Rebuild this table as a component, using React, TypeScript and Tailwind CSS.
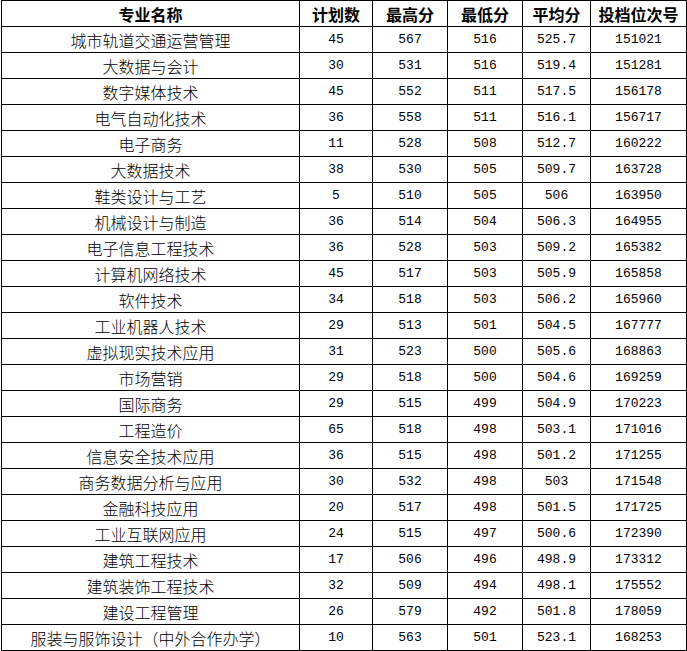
const rows: [string, string, string, string, string, string][] = [
  ['城市轨道交通运营管理', '45', '567', '516', '525.7', '151021'],
  ['大数据与会计', '30', '531', '516', '519.4', '151281'],
  ['数字媒体技术', '45', '552', '511', '517.5', '156178'],
  ['电气自动化技术', '36', '558', '511', '516.1', '156717'],
  ['电子商务', '11', '528', '508', '512.7', '160222'],
  ['大数据技术', '38', '530', '505', '509.7', '163728'],
  ['鞋类设计与工艺', '5', '510', '505', '506', '163950'],
  ['机械设计与制造', '36', '514', '504', '506.3', '164955'],
  ['电子信息工程技术', '36', '528', '503', '509.2', '165382'],
  ['计算机网络技术', '45', '517', '503', '505.9', '165858'],
  ['软件技术', '34', '518', '503', '506.2', '165960'],
  ['工业机器人技术', '29', '513', '501', '504.5', '167777'],
  ['虚拟现实技术应用', '31', '523', '500', '505.6', '168863'],
  ['市场营销', '29', '518', '500', '504.6', '169259'],
  ['国际商务', '29', '515', '499', '504.9', '170223'],
  ['工程造价', '65', '518', '498', '503.1', '171016'],
  ['信息安全技术应用', '36', '515', '498', '501.2', '171255'],
  ['商务数据分析与应用', '30', '532', '498', '503', '171548'],
  ['金融科技应用', '20', '517', '498', '501.5', '171725'],
  ['工业互联网应用', '24', '515', '497', '500.6', '172390'],
  ['建筑工程技术', '17', '506', '496', '498.9', '173312'],
  ['建筑装饰工程技术', '32', '509', '494', '498.1', '175552'],
  ['建设工程管理', '26', '579', '492', '501.8', '178059'],
  ['服装与服饰设计（中外合作办学）', '10', '563', '501', '523.1', '168253'],
];

const headers = ['专业名称', '计划数', '最高分', '最低分', '平均分', '投档位次号'];
const widths = ['w-[298px]', 'w-[73px]', 'w-[75px]', 'w-[75px]', 'w-[68px]', 'w-[96px]'];

export default function App() {
  return (
    <div className="bg-white w-[687px] h-[651px] pl-px">
      <table className="table-fixed border-collapse w-[685px] text-black font-['Noto_Sans_CJK_SC',sans-serif]">
        <colgroup>
          {widths.map((w, i) => (
            <col key={i} className={w} />
          ))}
        </colgroup>
        <thead>
          <tr className="h-[26px]">
            {headers.map((h) => (
              <th key={h} className="border border-black p-0 text-center text-[16px] font-bold leading-none">
                {h}
              </th>
            ))}
          </tr>
        </thead>
        <tbody>
          {rows.map((r) => (
            <tr key={r[0]} className="h-[26px]">
              <td className="border border-black p-0 text-center text-[16px] leading-none font-light">{r[0]}</td>
              {r.slice(1).map((v, i) => (
                <td
                  key={i}
                  className="border border-black p-0 text-center text-[13px] leading-none font-['Liberation_Mono',monospace]"
                >
                  {v}
                </td>
              ))}
            </tr>
          ))}
        </tbody>
      </table>
    </div>
  );
}
